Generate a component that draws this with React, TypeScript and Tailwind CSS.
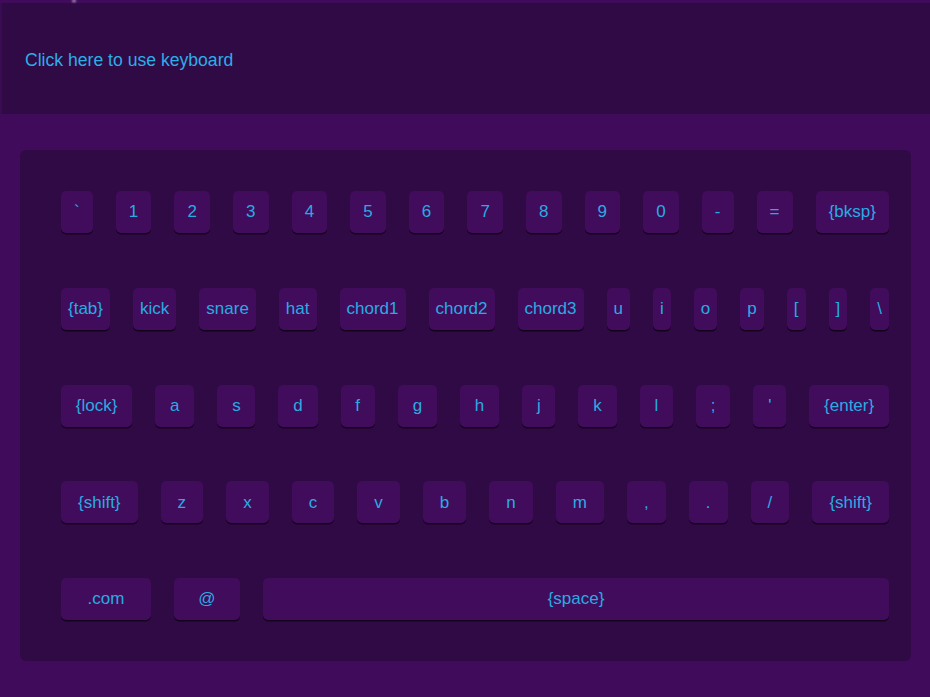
const rows: string[][] = [
  ['`', '1', '2', '3', '4', '5', '6', '7', '8', '9', '0', '-', '=', '{bksp}'],
  ['{tab}', 'kick', 'snare', 'hat', 'chord1', 'chord2', 'chord3', 'u', 'i', 'o', 'p', '[', ']', '\\'],
  ['{lock}', 'a', 's', 'd', 'f', 'g', 'h', 'j', 'k', 'l', ';', "'", '{enter}'],
  ['{shift}', 'z', 'x', 'c', 'v', 'b', 'n', 'm', ',', '.', '/', '{shift}'],
];

function Key({ label, className = 'grow' }: { label: string; className?: string }) {
  return (
    <div
      className={`flex h-[42px] items-center justify-center whitespace-nowrap rounded-[5px] bg-[#410c5b] px-[7px] text-[17px] text-[#29abe2] shadow-[0_1.5px_0_#14031c] ${className}`}
    >
      {label}
    </div>
  );
}

export default function App() {
  return (
    <div className="relative min-h-screen bg-[#400b5a] pt-[3px] font-['Liberation_Sans',Arial,sans-serif]">
      <span className="absolute left-[72px] top-0 h-[2px] w-[4px] rounded-full bg-white/70 blur-[1px]" />

      <div className="flex h-[111px] items-center border-l-2 border-[#3a0b52] bg-[#300a44] px-[23px] pt-[4px] text-[17.6px] text-[#2aaee8]">
        Click here to use keyboard
      </div>

      <div className="pb-[36px] pl-[20px] pr-[19px] pt-[36px]">
        <div className="flex flex-col gap-y-[54.75px] rounded-[6px] bg-[#300a44] pb-[41px] pl-[41px] pr-[22px] pt-[41px]">
          {rows.map((row, i) => (
            <div key={i} className="flex gap-[23px]">
              {row.map((k, j) => (
                <Key key={j} label={k} />
              ))}
            </div>
          ))}
          <div className="flex gap-[23px]">
            <Key label=".com" className="w-[90px] shrink-0" />
            <Key label="@" className="w-[66px] shrink-0" />
            <Key label="{space}" className="flex-1" />
          </div>
        </div>
      </div>
    </div>
  );
}
